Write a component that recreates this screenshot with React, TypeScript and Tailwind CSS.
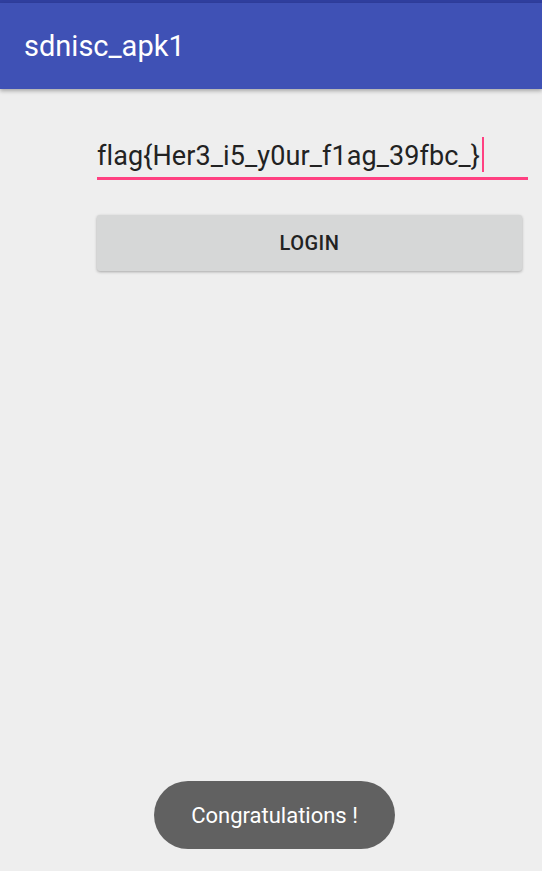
export default function App() {
  return (
    <div className="relative w-[542px] h-[871px] bg-[#eeeeee] overflow-hidden" style={{ fontFamily: 'Roboto, "Liberation Sans", sans-serif' }}>
      <div className="h-[3px] bg-[#303f9f]" />
      <header className="h-[86px] bg-[#3f51b5] flex items-center px-6 shadow-[0_2px_4px_rgba(0,0,0,0.3)]">
        <h1 className="text-white text-[29px] leading-none">sdnisc_apk1</h1>
      </header>

      <main className="pl-[97px] pr-[14px] pt-[46px]">
        <div className="relative border-b-[3px] border-[#ff4081] h-[45px] flex items-end pb-[7px]">
          <span className="text-[#222222] text-[27px] tracking-[0.1px] leading-none">flag{'{'}Her3_i5_y0ur_f1ag_39fbc_{'}'}</span>
          <span className="w-[2px] h-[35px] bg-[#ff4081] ml-[2px] mb-[-2px]" />
        </div>

        <button className="mt-[35px] w-[425px] h-[56px] bg-[#d6d7d7] rounded-[3px] shadow-[0_1px_3px_rgba(0,0,0,0.3)] text-[#222222] text-[20px] font-medium tracking-wide">
          LOGIN
        </button>
      </main>

      <div className="absolute left-[154px] top-[781px] w-[241px] h-[68px] rounded-full bg-[#616161] flex items-center justify-center">
        <span className="text-white text-[22px]">Congratulations !</span>
      </div>
    </div>
  )
}
